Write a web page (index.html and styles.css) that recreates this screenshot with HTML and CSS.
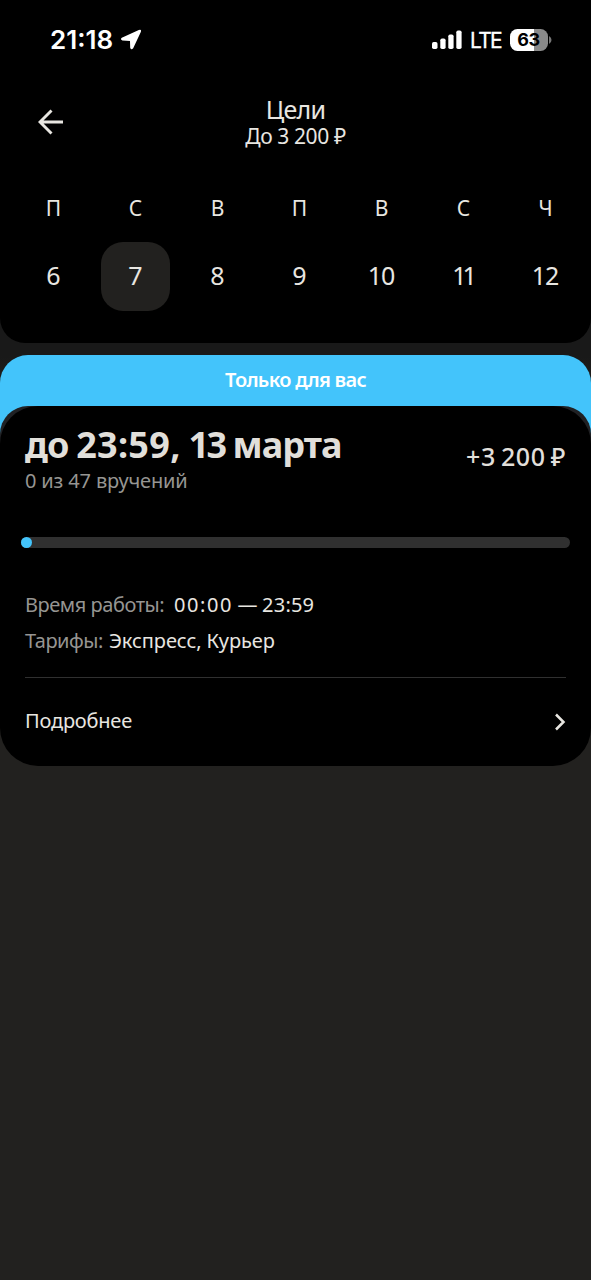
FILE: index.html
```html
<!DOCTYPE html>
<html lang="ru">
<head>
<meta charset="utf-8">
<meta name="viewport" content="width=device-width, initial-scale=1">
<title>Цели</title>
<link rel="stylesheet" href="styles.css">
</head>
<body>
<main class="screen">
  <header class="top">
    <div class="status">
      <span class="clock">21:18</span>
      <svg class="location" width="22" height="22" viewBox="0 0 22 22"><path d="M1.8 8.8 18.8 1Q21.8 0 20.8 3L13.2 19.2Q11.2 21.6 10.2 18.8L10 12 2.4 11.6Q-.2 10.4 1.8 8.8Z" fill="#fff"/></svg>
      <svg class="signal" width="30" height="20" viewBox="0 0 30 20" fill="#fff"><rect x="0" y="12" width="5.5" height="7" rx="1.7"/><rect x="8.3" y="8.5" width="5.3" height="10.5" rx="1.7"/><rect x="16.3" y="4.5" width="5.3" height="14.5" rx="1.7"/><rect x="24.3" y=".5" width="5.3" height="18.5" rx="1.7"/></svg>
      <span class="network">LTE</span>
      <div class="battery"><span class="level">63</span><svg class="nub" width="3" height="8" viewBox="0 0 3 8"><path d="M0 0Q2.5 1.3 2.5 4T0 8Z" fill="#777"/></svg></div>
    </div>
    <div class="nav">
      <svg class="back" width="26" height="26" viewBox="0 0 26 26" fill="none" stroke="#e8e6e1" stroke-width="2.9"><path d="M25 13H2.5M13.5 1.5 2 13l11.5 11.5"/></svg>
      <div class="heading">
        <h1 class="title">Цели</h1>
        <p class="subtitle">До 3 200 ₽</p>
      </div>
    </div>
    <div class="week">
      <div class="day"><span class="name">П</span><span class="date">6</span></div>
      <div class="day"><span class="name">С</span><span class="date selected">7</span></div>
      <div class="day"><span class="name">В</span><span class="date">8</span></div>
      <div class="day"><span class="name">П</span><span class="date">9</span></div>
      <div class="day"><span class="name">В</span><span class="date two-digit">10</span></div>
      <div class="day"><span class="name">С</span><span class="date eleven">11</span></div>
      <div class="day"><span class="name">Ч</span><span class="date two-digit">12</span></div>
    </div>
  </header>

  <section class="offer">
    <div class="banner"><span class="banner-text">Только для вас</span></div>
    <div class="back-layer">
      <div class="card-edge">
        <article class="card">
          <div class="goal">
            <div class="goal-text">
              <h2 class="deadline">до <span class="time">23:59,</span> <span class="number">13</span> марта</h2>
              <p class="count">0 из 47 вручений</p>
            </div>
            <span class="reward">+3 200 ₽</span>
          </div>
          <div class="progress"><span class="progress-dot"></span></div>
          <dl class="details">
            <div class="row"><dt class="hours-label">Время работы:</dt><dd class="hours"><span class="from">00:00</span> — 23:59</dd></div>
            <div class="row"><dt class="rates-label">Тарифы:</dt><dd class="rates">Экспресс, Курьер</dd></div>
          </dl>
          <div class="more">
            <span class="more-text">Подробнее</span>
            <svg width="12" height="18" viewBox="0 0 12 18" fill="none" stroke="#e8e6e1" stroke-width="2.5"><path d="m2 1.5 7.5 7.5L2 16.5"/></svg>
          </div>
        </article>
      </div>
    </div>
  </section>
</main>
</body>
</html>
```
FILE: styles.css
```css
* { box-sizing: border-box; }
body, h1, h2, p, dl, dd { margin: 0; }
body {
  background: #22211f;
  color: #e8e6e1;
  font-family: "Noto Sans", sans-serif;
}
.screen {
  width: 591px;
  min-height: 1280px;
  background: linear-gradient(#191919 356px, #22211f 400px);
}
h1, h2, p, span, dt, dd { white-space: nowrap; }
.top {
  height: 343px;
  background: #000;
  border-radius: 0 0 25px 25px;
}
.status {
  display: flex;
  align-items: center;
  height: 80px;
  padding: 0 39px 0 50px;
  color: #fff;
}
.clock { font: 600 26px/32px Inter, sans-serif; width: 70px; }
.location { margin-right: auto; }
.signal { margin-right: 8px; }
.network {
  width: 40px;
  padding-top: 1px;
  font: 400 21px/28px Inter, sans-serif;
  -webkit-text-stroke: 0.3px #fff;
  letter-spacing: -1.7px;
}
.battery { display: flex; align-items: center; gap: 1px; width: 42px; }
.level {
  width: 38px;
  height: 22px;
  border-radius: 7.5px;
  background: linear-gradient(90deg, #fff 63%, #8a8a8a 63%);
  color: #000;
  font: 700 18px/22px Inter, sans-serif;
  letter-spacing: -0.5px;
  text-indent: -1px;
  text-align: center;
}
.nav {
  display: grid;
  grid-template-columns: 90px 1fr 90px;
  height: 110px;
  padding-top: 15px;
}
.back { margin: 14px 0 0 38px; }
.heading { text-align: center; }
.title { font-size: 25px; line-height: 28px; font-weight: 400; letter-spacing: -0.7px; }
.subtitle { font-size: 21px; line-height: 27px; letter-spacing: -0.4px; }
.week {
  display: grid;
  grid-template-columns: repeat(7, 82px);
  padding-left: 12.5px;
  width: 591px;
  overflow: hidden;
}
.day { display: flex; flex-direction: column; align-items: center; gap: 16px; }
.name { font-size: 21px; line-height: 36px; }
.date {
  width: 69px;
  height: 69px;
  border-radius: 22px;
  font-size: 25px;
  line-height: 66px;
  text-align: center;
}
.two-digit { letter-spacing: -1px; text-indent: -1px; }
.eleven { letter-spacing: -4px; text-indent: -2px; }
.selected { background: #22211f; }
.offer { margin-top: 12px; }
.banner {
  height: 51px;
  border-radius: 28px 28px 0 0;
  background: #43c4fb;
  color: #fff;
  text-align: center;
}
.banner-text { font-size: 20px; line-height: 49px; font-weight: 600; letter-spacing: -0.72px; }
.back-layer {
  background: linear-gradient(#43c4fb 40px, transparent 40px);
}
.card-edge {
  border-radius: 28px 28px 0 0;
  background: linear-gradient(#202124 45px, transparent 45px);
}
.card {
  height: 360px;
  padding: 16px 25px 0;
  background: #000;
  border-radius: 38px;
}
.goal { display: flex; justify-content: space-between; height: 115px; }
.deadline {
  font-size: 36px;
  line-height: 45px;
  font-weight: 700;
  letter-spacing: -0.9px;
  word-spacing: -0.8px;
  color: #e1dfda;
}
.time { letter-spacing: 0.3px; }
.number { letter-spacing: -2.4px; }
.count { font-size: 20px; line-height: 27px; letter-spacing: -0.15px; color: #969592; }
.reward {
  font-size: 25px;
  line-height: 68px;
  font-weight: 500;
  letter-spacing: 0.6px;
  word-spacing: -2px;
  color: #e1dfda;
}
.progress {
  height: 11px;
  margin: 0 -4px;
  border-radius: 6px;
  background: #303030;
}
.progress-dot {
  display: block;
  width: 11px;
  height: 11px;
  border-radius: 50%;
  background: #43c4fb;
}
.details {
  height: 130px;
  padding-top: 39px;
  border-bottom: 1px solid #303030;
  font-size: 20px;
  line-height: 36px;
}
.row { display: flex; }
dt { color: #969592; }
.hours-label { width: 149px; letter-spacing: -0.45px; }
.rates-label { width: 84px; letter-spacing: -0.5px; }
.hours { letter-spacing: 0.2px; word-spacing: -1px; }
.from { letter-spacing: 1.6px; }
.rates { letter-spacing: -0.08px; }
.more {
  display: flex;
  align-items: center;
  justify-content: space-between;
  height: 87px;
  font-size: 20px;
}
.more-text { letter-spacing: -0.2px; padding-bottom: 2px; }
```
